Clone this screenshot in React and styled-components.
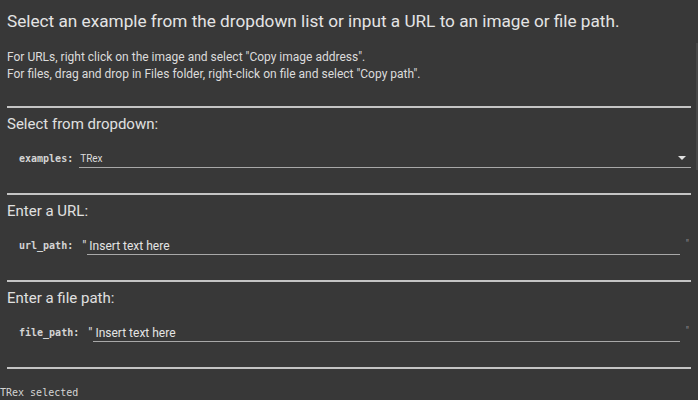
import React from "react";
import styled, { createGlobalStyle } from "styled-components";

const Global = createGlobalStyle`
  html, body { margin: 0; padding: 0; background: #383838; }
  body { font-family: Roboto, "Liberation Sans", sans-serif; color: #dedede; }
`;

const Page = styled.div`
  position: relative;
  width: 698px;
  height: 400px;
  overflow: hidden;
  background: #383838;
`;

const ScrollThumb = styled.div`
  position: absolute;
  right: 0;
  top: 43px;
  width: 2px;
  height: 127px;
  background: #474747;
`;

const Main = styled.div`
  padding: 9px 7px 0 7px;
`;

const Title = styled.h1`
  margin: 0;
  font-size: 17.2px;
  line-height: 24px;
  font-weight: 400;
  color: #e4e4e4;
`;

const Info = styled.div`
  margin-top: 16px;
  margin-bottom: 23px;
  font-size: 12px;
  line-height: 17px;
  color: #dcdcdc;
  p { margin: 0; }
`;

const Rule = styled.div`
  height: 2px;
  background: #c4c4c4;
`;

const Section = styled.section`
  padding-top: 6px;
  padding-bottom: 25px;
`;

const SectionTitle = styled.h2`
  margin: 0;
  font-size: 15px;
  line-height: 20px;
  font-weight: 400;
  color: #e0e0e0;
`;

const FieldRow = styled.div`
  display: flex;
  align-items: flex-end;
  height: 24px;
  margin-top: 10px;
  padding-left: 12px;
`;

const FieldLabel = styled.span`
  font-family: "DejaVu Sans Mono", "Liberation Mono", monospace;
  font-weight: 700;
  font-size: 10px;
  line-height: 14px;
  margin-bottom: 2px;
  margin-right: 6px;
  color: #d4d4d4;
  white-space: nowrap;
`;

const SelectBox = styled.div`
  flex: 1;
  display: flex;
  align-items: flex-end;
  height: 24px;
  box-sizing: border-box;
  border-bottom: 1px solid #a8a8a8;
  padding: 0 5px 1px 1px;
`;

const SelectValue = styled.span`
  flex: 1;
  font-size: 10px;
  line-height: 14px;
  color: #dcdcdc;
`;

const Caret = styled.span`
  width: 0;
  height: 0;
  border-left: 4px solid transparent;
  border-right: 4px solid transparent;
  border-top: 4px solid #e0e0e0;
  margin-bottom: 6px;
`;

const TextField = styled.div`
  flex: 1;
  display: flex;
  align-items: flex-end;
  height: 24px;
`;

const Quote = styled.span`
  font-size: ${(p) => (p.$closing ? "10px" : "13px")};
  line-height: 16px;
  color: ${(p) => (p.$closing ? "#8a8a8a" : "#e0e0e0")};
  padding: ${(p) => (p.$closing ? "0 2px 3px 6px" : "0 1px 1px 3px")};
`;

const TextInput = styled.div`
  flex: 1;
  box-sizing: border-box;
  border-bottom: 1px solid #a8a8a8;
  padding: 0 0 0 2px;
  font-size: 12px;
  line-height: 16px;
  color: #e4e4e4;
`;

const Output = styled.pre`
  margin: 17px 0 0 0;
  font-family: "DejaVu Sans Mono", "Liberation Mono", monospace;
  font-size: 10px;
  line-height: 14px;
  color: #d4d4d4;
`;

function TextRow({ label }) {
  return (
    <FieldRow>
      <FieldLabel>{label}</FieldLabel>
      <TextField>
        <Quote>"</Quote>
        <TextInput>Insert text here</TextInput>
        <Quote $closing>"</Quote>
      </TextField>
    </FieldRow>
  );
}

export default function App() {
  return (
    <Page>
      <Global />
      <Main>
        <Title>Select an example from the dropdown list or input a URL to an image or file path.</Title>
        <Info>
          <p>For URLs, right click on the image and select "Copy image address".</p>
          <p>For files, drag and drop in Files folder, right-click on file and select "Copy path".</p>
        </Info>
        <Rule />
        <Section>
          <SectionTitle>Select from dropdown:</SectionTitle>
          <FieldRow>
            <FieldLabel>examples:</FieldLabel>
            <SelectBox>
              <SelectValue>TRex</SelectValue>
              <Caret />
            </SelectBox>
          </FieldRow>
        </Section>
        <Rule />
        <Section>
          <SectionTitle>Enter a URL:</SectionTitle>
          <TextRow label="url_path:" />
        </Section>
        <Rule />
        <Section>
          <SectionTitle>Enter a file path:</SectionTitle>
          <TextRow label="file_path:" />
        </Section>
        <Rule />
      </Main>
      <Output>TRex selected</Output>
      <ScrollThumb />
    </Page>
  );
}
